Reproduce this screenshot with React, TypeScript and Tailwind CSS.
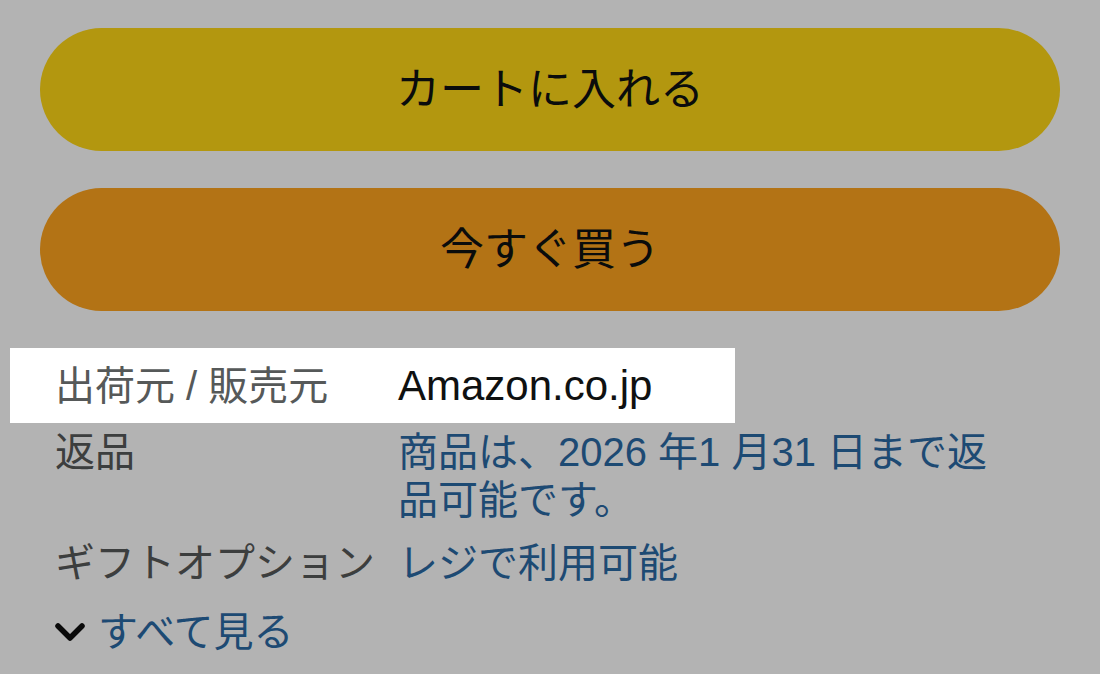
export default function App() {
  const font = { fontFamily: '"Liberation Sans", "Noto Sans CJK JP", sans-serif' }

  return (
    <div className="w-[1100px] h-[674px] bg-[#b3b3b3] overflow-hidden" style={font}>
      <div className="px-10 pt-[28px] flex flex-col gap-[37px]">
        <button className="h-[123px] w-full rounded-full bg-[#b3970f] text-[44px] text-[#0a0c0c]">
          カートに入れる
        </button>
        <button className="h-[123px] w-full rounded-full bg-[#b37315] text-[44px] text-[#0a0c0c]">
          今すぐ買う
        </button>
      </div>

      <div className="mt-[37px] text-[40px] leading-[48px]">
        <div className="ml-[10px] w-[725px] h-[75px] bg-white flex items-center pl-[45px]">
          <div className="w-[343px] text-[#565959]">出荷元 / 販売元</div>
          <div className="text-[42px] text-[#0f1111]">Amazon.co.jp</div>
        </div>

        <div className="mt-[5px] pl-[55px] flex">
          <div className="w-[343px] shrink-0 text-[#3c3e3e]">返品</div>
          <div className="w-[600px] text-[#1d4a73]">
            商品は、2026 年1 月31 日まで返品可能です。
          </div>
        </div>

        <div className="mt-[15px] pl-[55px] flex">
          <div className="w-[343px] shrink-0 text-[#3c3e3e]">ギフトオプション</div>
          <div className="text-[#1d4a73]">レジで利用可能</div>
        </div>

        <div className="mt-[21px] pl-[54px] flex items-center gap-[12px]">
          <svg width="32" height="24" viewBox="0 0 32 24" className="shrink-0">
            <polyline
              points="4,6 16,18 28,6"
              fill="none"
              stroke="#0a0a0a"
              strokeWidth="5.5"
              strokeLinecap="round"
              strokeLinejoin="round"
            />
          </svg>
          <span className="text-[#1d4a73]">すべて見る</span>
        </div>
      </div>
    </div>
  )
}
